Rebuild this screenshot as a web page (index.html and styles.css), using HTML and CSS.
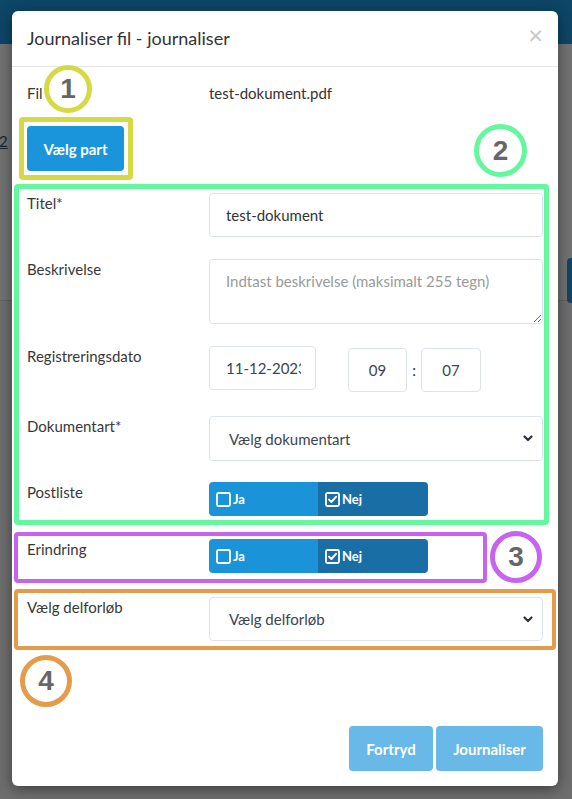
FILE: index.html
```html
<!DOCTYPE html>
<html lang="da">
<head>
<meta charset="utf-8">
<title>Journaliser fil</title>
<link rel="stylesheet" href="styles.css">
</head>
<body>
<div class="page">
  <div class="topbar"></div>
  <div class="bg-content"><span class="bg-num">2</span></div>
  <div class="bg-tab"></div>
</div>

<div class="modal">
  <div class="modal-header">
    <h4 class="modal-title">Journaliser fil - journaliser</h4>
    <span class="close">×</span>
  </div>

  <div class="modal-body">
    <div class="row row-fil">
      <div class="label">Fil</div>
      <div class="value">test-dokument.pdf</div>
    </div>

    <div class="row-part">
      <button class="btn btn-part">Vælg part</button>
    </div>

    <div class="row row-titel">
      <label class="label">Titel*</label>
      <input class="control" type="text" value="test-dokument">
    </div>

    <div class="row row-besk">
      <label class="label">Beskrivelse</label>
      <textarea class="control area" placeholder="Indtast beskrivelse (maksimalt 255 tegn)"></textarea>
    </div>

    <div class="row row-dato">
      <label class="label">Registreringsdato</label>
      <div class="dato">
        <div class="control date"><span>11-12-2023</span></div>
        <input class="control time" type="text" value="09">
        <span class="colon">:</span>
        <input class="control time" type="text" value="07">
      </div>
    </div>

    <div class="row row-dok">
      <label class="label">Dokumentart*</label>
      <div class="control select">
        <span>Vælg dokumentart</span>
        <svg class="chev" width="10" height="7" viewBox="0 0 10 7"><path d="M1.5 1.5 L5 5 L8.5 1.5" fill="none" stroke="#2b3240" stroke-width="2.2" stroke-linecap="round" stroke-linejoin="round"/></svg>
      </div>
    </div>

    <div class="row row-post">
      <label class="label">Postliste</label>
      <div class="toggle">
        <div class="half off">
          <svg width="15" height="15" viewBox="0 0 15 15"><rect x="1" y="1" width="13" height="13" rx="1.5" fill="none" stroke="#fff" stroke-width="1.8"/></svg>
          <span>Ja</span>
        </div>
        <div class="half on">
          <svg width="15" height="15" viewBox="0 0 15 15"><rect x="1" y="1" width="13" height="13" rx="1.5" fill="none" stroke="#fff" stroke-width="1.8"/><path d="M4 7.6 L6.4 10 L11 4.8" fill="none" stroke="#fff" stroke-width="2" stroke-linecap="round" stroke-linejoin="round"/></svg>
          <span>Nej</span>
        </div>
      </div>
    </div>

    <div class="row row-erin">
      <label class="label">Erindring</label>
      <div class="toggle">
        <div class="half off">
          <svg width="15" height="15" viewBox="0 0 15 15"><rect x="1" y="1" width="13" height="13" rx="1.5" fill="none" stroke="#fff" stroke-width="1.8"/></svg>
          <span>Ja</span>
        </div>
        <div class="half on">
          <svg width="15" height="15" viewBox="0 0 15 15"><rect x="1" y="1" width="13" height="13" rx="1.5" fill="none" stroke="#fff" stroke-width="1.8"/><path d="M4 7.6 L6.4 10 L11 4.8" fill="none" stroke="#fff" stroke-width="2" stroke-linecap="round" stroke-linejoin="round"/></svg>
          <span>Nej</span>
        </div>
      </div>
    </div>

    <div class="row row-delf">
      <label class="label">Vælg delforløb</label>
      <div class="control select">
        <span>Vælg delforløb</span>
        <svg class="chev" width="10" height="7" viewBox="0 0 10 7"><path d="M1.5 1.5 L5 5 L8.5 1.5" fill="none" stroke="#2b3240" stroke-width="2.2" stroke-linecap="round" stroke-linejoin="round"/></svg>
      </div>
    </div>
  </div>

  <div class="modal-footer">
    <button class="btn btn-foot btn-fortryd">Fortryd</button>
    <button class="btn btn-foot btn-journ">Journaliser</button>
  </div>

  <div class="mark box-yellow"></div>
  <div class="mark box-green"></div>
  <div class="mark box-purple"></div>
  <div class="mark box-orange"></div>
  <div class="num num-1">1</div>
  <div class="num num-2">2</div>
  <div class="num num-3">3</div>
  <div class="num num-4">4</div>
</div>
</body>
</html>
```

FILE: styles.css
```css
* { box-sizing: border-box; }

html, body {
  margin: 0;
  padding: 0;
}

body {
  width: 572px;
  height: 799px;
  overflow: hidden;
  background: #6e6e6e;
  font-family: Lato, "Open Sans", sans-serif;
  position: relative;
}

.page {
  position: relative;
  height: 799px;
}

.topbar {
  height: 44px;
  background: #0e4667;
}

.bg-content {
  height: 257px;
  border-bottom: 1px solid #626262;
  background: #727272;
  position: relative;
}

.bg-num {
  position: absolute;
  left: -1px;
  top: 88px;
  font-size: 15px;
  color: #1c2530;
  text-decoration: underline;
}

.bg-tab {
  position: absolute;
  left: 567px;
  top: 258px;
  width: 20px;
  height: 45px;
  background: #0e4666;
  border-radius: 4px;
}

/* modal */
.modal {
  position: absolute;
  left: 12px;
  top: 11px;
  width: 546px;
  background: #fff;
  border-radius: 6px;
  box-shadow: 0 3px 14px rgba(0, 0, 0, 0.45);
  color: #333;
}

.modal-header {
  height: 56px;
  padding: 15px;
  border-bottom: 1px solid #e5e5e5;
  position: relative;
}

.modal-title {
  margin: 0;
  font-size: 18px;
  line-height: 25px;
  font-weight: 400;
  color: #333;
}

.close {
  position: absolute;
  right: 14px;
  top: 12px;
  font-size: 20px;
  line-height: 25px;
  font-weight: 400;
  color: #c4c4c4;
  font-family: "DejaVu Sans", sans-serif;
}

.modal-body {
  padding: 16px 15px 0;
}

.row {
  display: grid;
  grid-template-columns: 182px 334px;
  align-items: start;
}

.label {
  font-size: 15px;
  line-height: 21px;
  color: #383838;
}

.value {
  font-size: 15px;
  line-height: 21px;
  color: #333;
}

.row-fil { height: 22px; }

.row-part {
  margin-top: 21px;
  height: 45px;
}

.btn {
  font-family: Lato, "Open Sans", sans-serif;
  border: 0;
  border-radius: 4px;
  color: #fff;
  cursor: pointer;
}

.btn-part {
  width: 97px;
  height: 45px;
  background: #1a94db;
  font-size: 15px;
  font-weight: 700;
  padding: 0;
}

.row-titel { margin-top: 22px; }
.row-besk { margin-top: 22px; }
.row-dato { margin-top: 22px; }
.row-dok { margin-top: 24px; }
.row-post { margin-top: 21px; }
.row-erin { margin-top: 23px; }
.row-delf { margin-top: 24px; }

.control {
  display: block;
  width: 334px;
  height: 44px;
  border: 1px solid #dde3ea;
  border-radius: 4px;
  background: #fff;
  font-family: Lato, "Open Sans", sans-serif;
  font-size: 15px;
  color: #333;
  padding: 0 16px;
  outline: none;
  margin: 0;
}

.area {
  height: 65px;
  padding: 11px 16px;
  line-height: 21px;
  resize: vertical;
}

.area::placeholder {
  color: #9a9a9a;
}

.dato {
  display: flex;
  align-items: flex-start;
  height: 46px;
}

.date {
  width: 107px;
  color: #3a4456;
  display: flex;
  align-items: center;
  overflow: hidden;
  white-space: nowrap;
}

.date span {
  display: block;
  width: 75px;
  overflow: hidden;
  flex: none;
}

.time {
  width: 60px;
  margin-top: 2px;
  text-align: center;
  color: #3a4456;
  padding: 0 4px;
}

.dato .time:nth-of-type(1) {
  margin-left: 32px;
  width: 59px;
}

.colon {
  width: 14px;
  text-align: center;
  font-size: 15px;
  line-height: 44px;
  margin-top: 2px;
  color: #333;
}

.select {
  height: 45px;
  display: flex;
  align-items: center;
  justify-content: space-between;
  padding: 0 9px 0 19px;
  color: #3a4456;
}

.row-delf .select { height: 44px; }

.chev { display: block; }

.toggle {
  display: flex;
  width: 219px;
  height: 34px;
  border-radius: 4px;
  overflow: hidden;
}

.half {
  display: flex;
  align-items: center;
  gap: 2px;
  padding-left: 7px;
  color: #fff;
  font-size: 13px;
  font-weight: 700;
}

.half svg { display: block; }

.half.off {
  width: 109px;
  background: #1a93d9;
}

.half.on {
  width: 110px;
  background: #196fa5;
}

.modal-footer {
  display: flex;
  justify-content: flex-end;
  gap: 3px;
  padding: 85px 15px 15px;
}

.btn-foot {
  height: 45px;
  background: #68b8e8;
  font-size: 15px;
  font-weight: 700;
  padding: 0;
}

.btn-fortryd { width: 84px; }
.btn-journ { width: 107px; }

/* annotations */
.mark {
  position: absolute;
  border: 4px solid;
  border-radius: 4px;
  pointer-events: none;
}

.box-yellow {
  left: 7px;
  top: 106px;
  width: 114px;
  height: 63px;
  border-width: 5px;
  border-color: #d5d944;
}

.box-green {
  left: 2px;
  top: 173px;
  width: 535px;
  height: 341px;
  border-width: 5px;
  border-color: #64f79e;
}

.box-purple {
  left: 2px;
  top: 521px;
  width: 473px;
  height: 51px;
  border-color: #c764ef;
}

.box-orange {
  left: 2px;
  top: 578px;
  width: 542px;
  height: 61px;
  border-color: #e39b4c;
}

.num {
  position: absolute;
  border: 4px solid;
  border-radius: 50%;
  background: #fff;
  display: flex;
  align-items: center;
  justify-content: center;
  font-family: "Liberation Sans", Arial, sans-serif;
  font-weight: 700;
  font-size: 28px;
  color: #666;
}

.num-1 {
  left: 32px;
  top: 54px;
  width: 48px;
  height: 48px;
  border-color: #d5d944;
  border-width: 5px;
}

.num-2 {
  left: 462px;
  top: 113px;
  width: 53px;
  height: 53px;
  border-color: #64f79e;
  border-width: 5px;
}

.num-3 {
  left: 478px;
  top: 520px;
  width: 52px;
  height: 52px;
  border-color: #c764ef;
  border-width: 5px;
}

.num-4 {
  left: 8px;
  top: 644px;
  width: 52px;
  height: 52px;
  border-color: #e39b4c;
  border-width: 5px;
}
```
